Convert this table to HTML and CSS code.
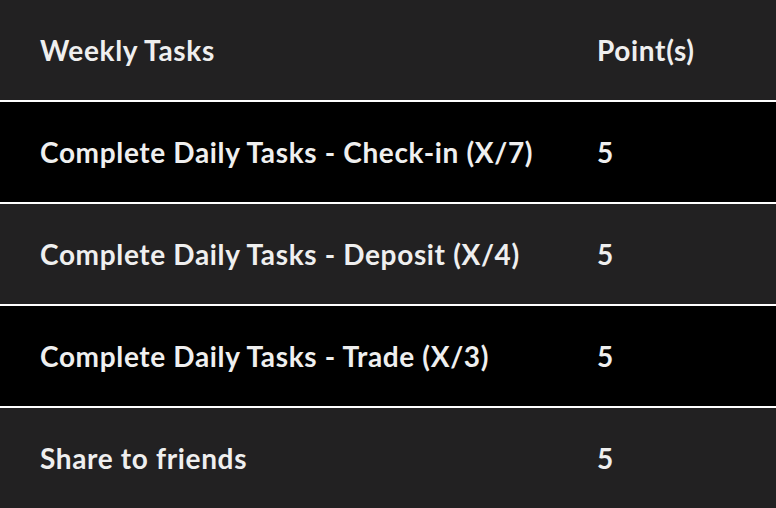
FILE: index.html
```html
<!DOCTYPE html>
<html>
<head>
<meta charset="utf-8">
<link rel="stylesheet" href="styles.css">
</head>
<body>
<div class="table">
  <div class="row head">
    <div class="task">Weekly Tasks</div>
    <div class="pts">Point(s)</div>
  </div>
  <div class="row dark">
    <div class="task">Complete Daily Tasks - Check-in (X/7)</div>
    <div class="pts">5</div>
  </div>
  <div class="row">
    <div class="task">Complete Daily Tasks - Deposit (X/4)</div>
    <div class="pts">5</div>
  </div>
  <div class="row dark">
    <div class="task">Complete Daily Tasks - Trade (X/3)</div>
    <div class="pts">5</div>
  </div>
  <div class="row last">
    <div class="task">Share to friends</div>
    <div class="pts">5</div>
  </div>
</div>
</body>
</html>
```

FILE: styles.css
```css
html, body {
  margin: 0;
  padding: 0;
  background: #222122;
}
.table {
  width: 776px;
  font-family: Lato, "Noto Sans", sans-serif;
  font-weight: 700;
  font-size: 28px;
  letter-spacing: 0.65px;
  color: #efefef;
}
.row {
  display: flex;
  align-items: center;
  height: 100px;
  background: #222122;
  border-bottom: 2px solid #ffffff;
  box-sizing: content-box;
}
.row.last {
  border-bottom: none;
}
.row.dark {
  background: #000000;
}
.task {
  width: 557px;
  padding-left: 40px;
}
.pts {
  flex: 1;
}
```
